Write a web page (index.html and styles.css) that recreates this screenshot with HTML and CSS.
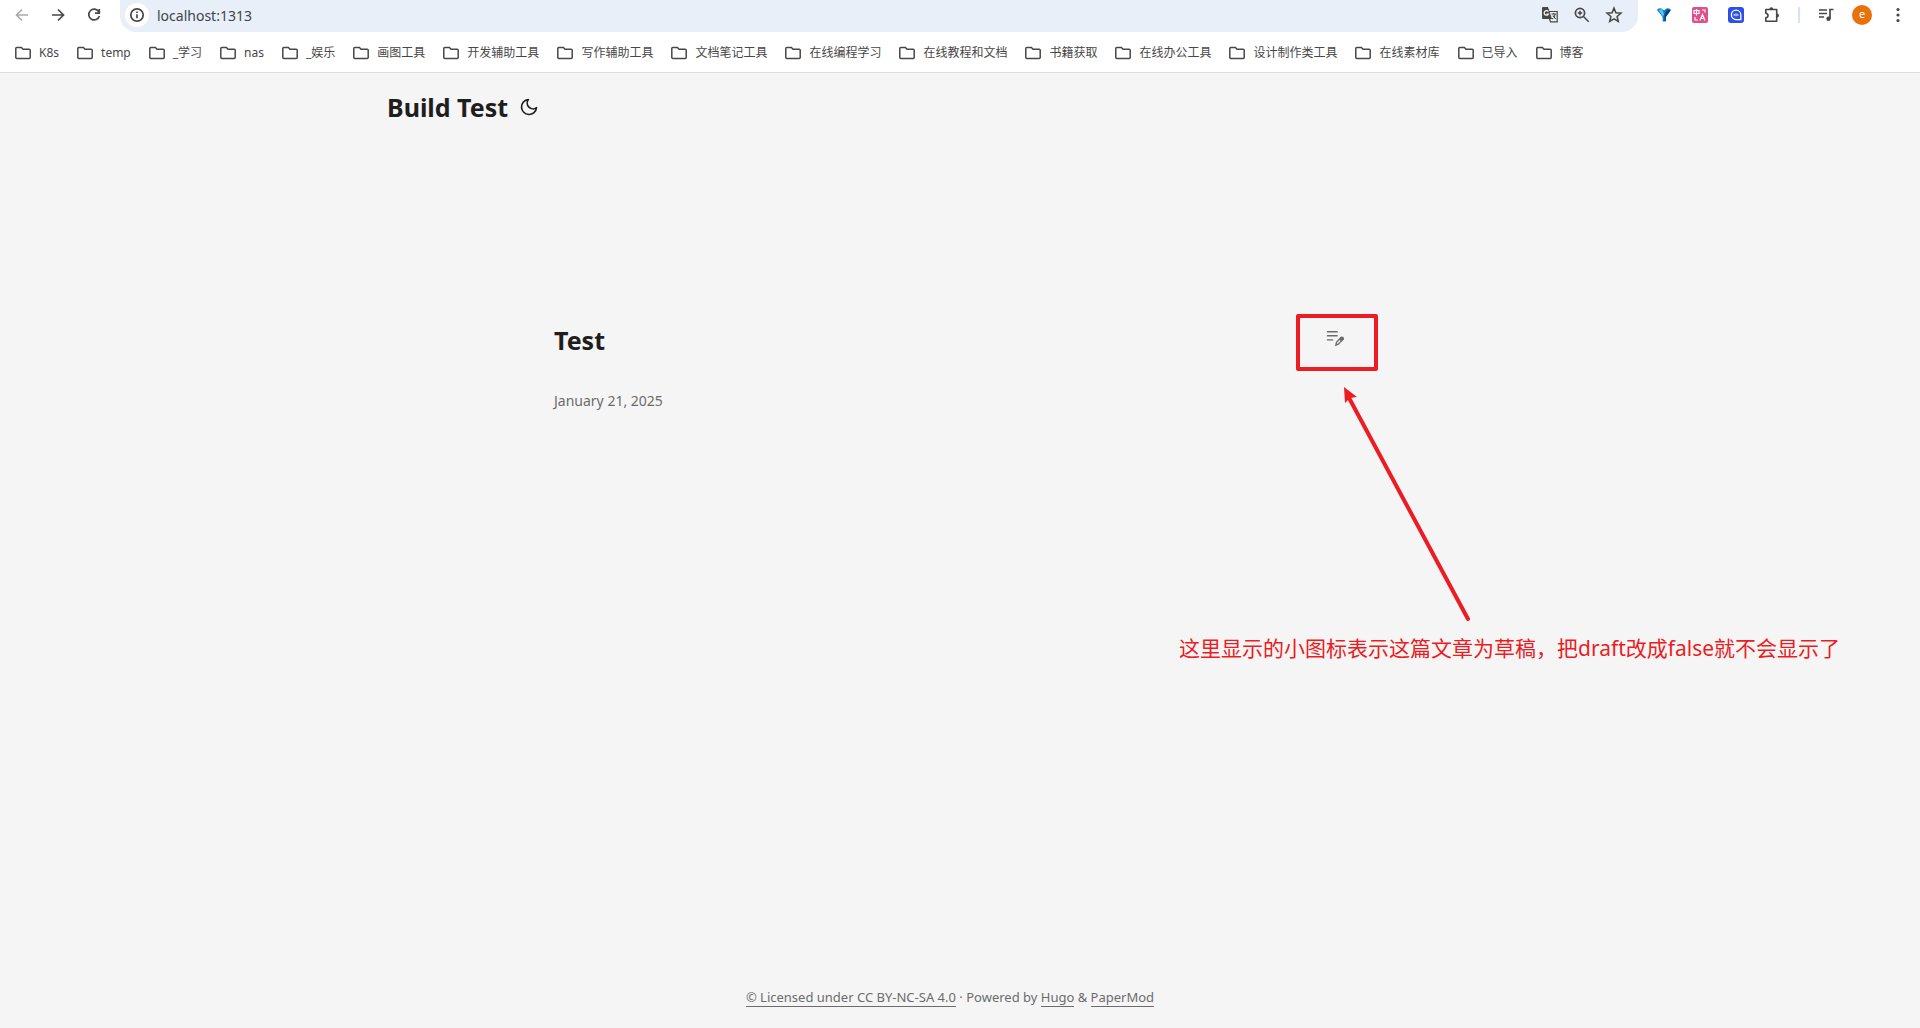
FILE: index.html
```html
<!DOCTYPE html>
<html lang="zh-CN">
<head>
<meta charset="utf-8">
<meta name="viewport" content="width=device-width, initial-scale=1">
<title>Build Test</title>
<link rel="stylesheet" href="styles.css">
</head>
<body>
<svg class="defs" width="0" height="0" aria-hidden="true">
  <symbol id="folder" viewBox="0 0 16 16"><path d="M.8 3.300v9.200q0 1 1 1h12.400q1 0 1-1V5.300q0-1-1-1H8L6.400 2.500H1.800q-1 0-1 .8z" fill="none" stroke="currentColor" stroke-width="1.500"/></symbol>
</svg>
<div class="browser">
  <div class="toolbar">
    <button class="tool tool-disabled" aria-label="Back"><svg width="24" height="20" viewBox="0 0 24 20"><path d="M18 10H7M12 4.500 6.500 10l5.500 5.500" /></svg></button>
    <button class="tool" aria-label="Forward"><svg width="24" height="20" viewBox="0 0 24 20"><path d="M6 10h11M12 4.500 17.500 10 12 15.500" /></svg></button>
    <button class="tool" aria-label="Reload"><svg width="20" height="20" viewBox="0 0 20 20"><path d="M14.800 6.700A5.400 5.400 0 1 0 15.400 11M15.300 4v4.200H11" /></svg></button>
    <div class="address">
      <button class="site-info" aria-label="Site information"><svg width="16" height="16" viewBox="0 0 16 16"><circle cx="8" cy="8" r="6.200"/><path d="M8 7.200v4M8 4.500v1.500"/></svg></button>
      <input class="url" type="text" aria-label="Address" value="localhost:1313">
      <button class="pill-tool" aria-label="Translate"><svg width="18" height="18" viewBox="0 0 18 18"><path d="M7.500 5.500h8.700v10.300H9.500l-1-3" stroke-width="1.200"/><path d="M1 2q0-1 1-1h5l4 12H2q-1 0-1-1z" class="solid"/><path d="M7.300 5.600A2.300 2.300 0 1 0 7.500 8H5.500" stroke="#fff" stroke-width="1.200"/><path d="M10.500 8h4.800M12.700 7v1M14.300 8c-.5 2.300-1.800 4-3.300 5M11.800 9.500l2.900 3.500" stroke-width="1.100"/></svg></button>
      <button class="pill-tool" aria-label="Zoom"><svg width="18" height="18" viewBox="0 0 18 18"><circle cx="7" cy="7" r="4.600"/><path d="m10.500 10.500 5.200 5.200M7 4.800v4.400M4.800 7h4.400" stroke-width="1.500"/></svg></button>
      <button class="pill-tool" aria-label="Bookmark this page"><svg width="18" height="18" viewBox="0 0 18 18"><path d="m9 2 1.900 4.800 5.100.4-3.900 3.300 1.200 5L9 12.800l-4.300 2.700 1.200-5L2 7.200l5.100-.4z" stroke-width="1.500"/></svg></button>
    </div>
    <button class="tool" aria-label="V extension"><svg width="16" height="16" viewBox="0 0 16 16"><path d="M1 3Q2 .8 5.500 1.500L8 3.500l2.500-2Q14 .8 15 3L9.800 10v4.500H6.700V10z" fill="#087bc7" stroke="none"/><path d="M2.500 3 6 2l2 5-1 2.500z" fill="#50c9f5" stroke="none"/><path d="M11.500 2.500 8.500 8v6h1.300v-4L14.500 3.500z" fill="#103b75" stroke="none"/></svg></button>
    <button class="tool" aria-label="Translation extension"><svg width="16" height="16" viewBox="0 0 16 16"><rect width="16" height="16" rx="2" fill="#e14f8b" stroke="none"/><path d="M2 3.500h5v3H2zM4.500 2v6.500M8 13.500l2.500-6 2.500 6M9 11.500h3M10 3h3v2.500M3 10v3h3" stroke="#fff" stroke-width="1.200"/></svg></button>
    <button class="tool" aria-label="Chat extension"><svg width="16" height="16" viewBox="0 0 16 16"><rect width="16" height="16" rx="3" fill="#2f50e8" stroke="none"/><path d="M12.800 12.600H8a4.700 4.700 0 1 1 4.800-4.700z" stroke="#fff" stroke-width="1.300"/><path d="M6.200 7v1.800M8 6.500v2.800M9.800 7v1.800" stroke="#fff" stroke-width="1"/></svg></button>
    <button class="tool" aria-label="Extensions"><svg width="18" height="18" viewBox="0 0 18 18"><path d="M2.800 3.500h10.900v11.700H2.800v-3.500q2.200-.3 2.200-2.200T2.800 7.300z" stroke-width="1.600" stroke-linejoin="round"/><path d="M6.300 3.200a2 2 0 0 1 4 0zM14 7.500a2 2 0 0 1 0 4z" class="solid"/></svg></button>
    <span class="divider"></span>
    <button class="tool" aria-label="Media controls"><svg width="18" height="18" viewBox="0 0 18 18"><path d="M2 4h8M2 7.500h8M2 11h5M16.500 3.500H13v9"/><circle cx="11.500" cy="12.700" r="2.200" class="solid"/></svg></button>
    <button class="tool" aria-label="Profile"><span class="avatar">e</span></button>
    <button class="tool" aria-label="Menu"><svg width="18" height="18" viewBox="0 0 18 18" class="dots"><circle cx="9" cy="3.500" r="1.600"/><circle cx="9" cy="9" r="1.600"/><circle cx="9" cy="14.500" r="1.600"/></svg></button>
  </div>
  <nav class="bookmarks" aria-label="Bookmarks">
    <button class="bookmark"><svg class="folder"><use href="#folder"/></svg>K8s</button>
    <button class="bookmark"><svg class="folder"><use href="#folder"/></svg>temp</button>
    <button class="bookmark"><svg class="folder"><use href="#folder"/></svg>_学习</button>
    <button class="bookmark"><svg class="folder"><use href="#folder"/></svg>nas</button>
    <button class="bookmark"><svg class="folder"><use href="#folder"/></svg>_娱乐</button>
    <button class="bookmark"><svg class="folder"><use href="#folder"/></svg>画图工具</button>
    <button class="bookmark"><svg class="folder"><use href="#folder"/></svg>开发辅助工具</button>
    <button class="bookmark"><svg class="folder"><use href="#folder"/></svg>写作辅助工具</button>
    <button class="bookmark"><svg class="folder"><use href="#folder"/></svg>文档笔记工具</button>
    <button class="bookmark"><svg class="folder"><use href="#folder"/></svg>在线编程学习</button>
    <button class="bookmark"><svg class="folder"><use href="#folder"/></svg>在线教程和文档</button>
    <button class="bookmark"><svg class="folder"><use href="#folder"/></svg>书籍获取</button>
    <button class="bookmark"><svg class="folder"><use href="#folder"/></svg>在线办公工具</button>
    <button class="bookmark"><svg class="folder"><use href="#folder"/></svg>设计制作类工具</button>
    <button class="bookmark"><svg class="folder"><use href="#folder"/></svg>在线素材库</button>
    <button class="bookmark"><svg class="folder"><use href="#folder"/></svg>已导入</button>
    <button class="bookmark"><svg class="folder"><use href="#folder"/></svg>博客</button>
  </nav>
</div>
<div class="page">
  <header class="site-header">
    <a class="logo" href="#">Build Test</a>
    <button class="theme" aria-label="Toggle theme"><svg width="20" height="20" viewBox="0 0 24 24"><path d="M21 12.790A9 9 0 1 1 11.210 3 7 7 0 0 0 21 12.790z"/></svg></button>
  </header>
  <main class="main">
    <article class="entry">
      <div class="entry-head">
        <h2 class="entry-title">Test</h2>
        <svg class="draft" viewBox="0 0 20 20" role="img" aria-label="Draft"><path d="M1 3h12M1 7.500h12M1 12h7"/><path d="m11 18 .6-3.200 5-5q1-1 2 0t0 2l-5 5z"/><path d="m15.200 11.200 2 2 2-2q0-2-2-2z" fill="currentColor"/></svg>
      </div>
      <time class="date" datetime="2025-01-21">January 21, 2025</time>
      <div class="mark-box"></div>
      <svg class="mark-arrow" width="132" height="240" viewBox="0 0 132 240" aria-hidden="true"><path d="M8 9 128 232" stroke="#ec1c24" stroke-width="4" stroke-linecap="round"/><path d="M4 0 17 10 10 11 5 16z" fill="#ec1c24"/></svg>
      <p class="mark-text">这里显示的小图标表示这篇文章为草稿，把draft改成false就不会显示了</p>
    </article>
  </main>
  <footer class="footer"><a href="#">© Licensed under CC BY-NC-SA 4.0</a> · Powered by <a href="#">Hugo</a> &amp; <a href="#">PaperMod</a></footer>
</div>
</body>
</html>
```
FILE: styles.css
```css
* { box-sizing: border-box; }
body {
  margin: 0;
  min-height: 100vh;
  display: flex;
  flex-direction: column;
  background: #f5f5f5;
  font-family: "Noto Sans", "Noto Sans CJK SC", sans-serif;
}
button, input { font: inherit; border: 0; background: none; padding: 0; color: inherit; }
a { color: inherit; text-decoration: none; }
.defs { position: absolute; }

.browser { background: #fff; border-bottom: 1px solid #dedede; color: #474747; }
.toolbar { display: flex; align-items: flex-start; height: 32px; padding: 0 4px; }
.tool, .pill-tool {
  display: flex;
  align-items: center;
  justify-content: center;
  flex: none;
  width: 36px;
  height: 30px;
}
.pill-tool { width: 32px; }
.tool-disabled { color: #aaa; }
.toolbar svg { fill: none; stroke: currentColor; stroke-width: 1.700; }
.toolbar .solid, .toolbar .dots { fill: currentColor; stroke: none; }
.address {
  display: flex;
  flex: 1;
  min-width: 0;
  height: 32px;
  margin: 0 8px;
  padding: 0 8px 0 5px;
  border-radius: 0 0 16px 16px;
  background: #e9eff8;
}
.site-info {
  display: flex;
  align-items: center;
  justify-content: center;
  flex: none;
  width: 24px;
  height: 24px;
  margin: 3px 8px 0 0;
  border-radius: 50%;
  background: #fff;
}
.url { flex: 1; min-width: 0; height: 30px; font-size: 14px; color: #40444a; }
.divider { flex: none; width: 2px; height: 16px; margin: 7px 8px 0; background: #d3e3fd; }
.avatar {
  width: 20px;
  height: 20px;
  border-radius: 50%;
  background: #e8710a;
  color: #fff;
  font-size: 11px;
  line-height: 18px;
}
.bookmarks { display: flex; gap: 18px; height: 40px; padding: 0 15px; overflow: hidden; }
.bookmark { display: flex; align-items: center; flex: none; gap: 8px; height: 41px; font-size: 12px; line-height: 20px; white-space: nowrap; }
.folder { width: 16px; height: 16px; }

.page { flex: 1; display: flex; flex-direction: column; padding-right: 20px; }
.site-header {
  display: flex;
  align-items: center;
  gap: 11px;
  width: 100%;
  max-width: 1180px;
  height: 68px;
  margin: 0 auto;
  padding: 0 27px;
  color: #1e1e1e;
}
.logo { font-size: 25px; font-weight: 700; line-height: 32px; }
.theme { display: flex; }
.theme svg { fill: none; stroke: currentColor; stroke-width: 2; stroke-linecap: round; stroke-linejoin: round; }
.main { flex: 1; width: 100%; max-width: 846px; margin: 0 auto; padding: 179px 27px 0; }
.entry { position: relative; }
.entry-head { display: flex; justify-content: space-between; padding-right: 2px; }
.entry-title { margin: 0; color: #1e1e1e; font-size: 25px; line-height: 40px; font-weight: 700; }
.draft { width: 18px; height: 18px; margin-top: 9px; color: #6c6c6c; fill: none; stroke: currentColor; stroke-width: 1.500; }
.date { display: block; margin-top: 29px; color: #6c6c6c; font-size: 14px; line-height: 24px; }
.mark-box { position: absolute; left: 742px; top: -6px; width: 82px; height: 57px; border: 4px solid #ec1c24; border-radius: 2px; }
.mark-arrow { position: absolute; left: 786px; top: 67px; fill: none; }
.mark-text { position: absolute; left: 625px; top: 312px; margin: 0; color: #ec1c24; font-size: 21px; line-height: 32px; white-space: nowrap; }
.footer { padding: 19px 24px; text-align: center; color: #6c6c6c; font-size: 13px; line-height: 24px; }
.footer a { border-bottom: 1px solid #6c6c6c; }
```
